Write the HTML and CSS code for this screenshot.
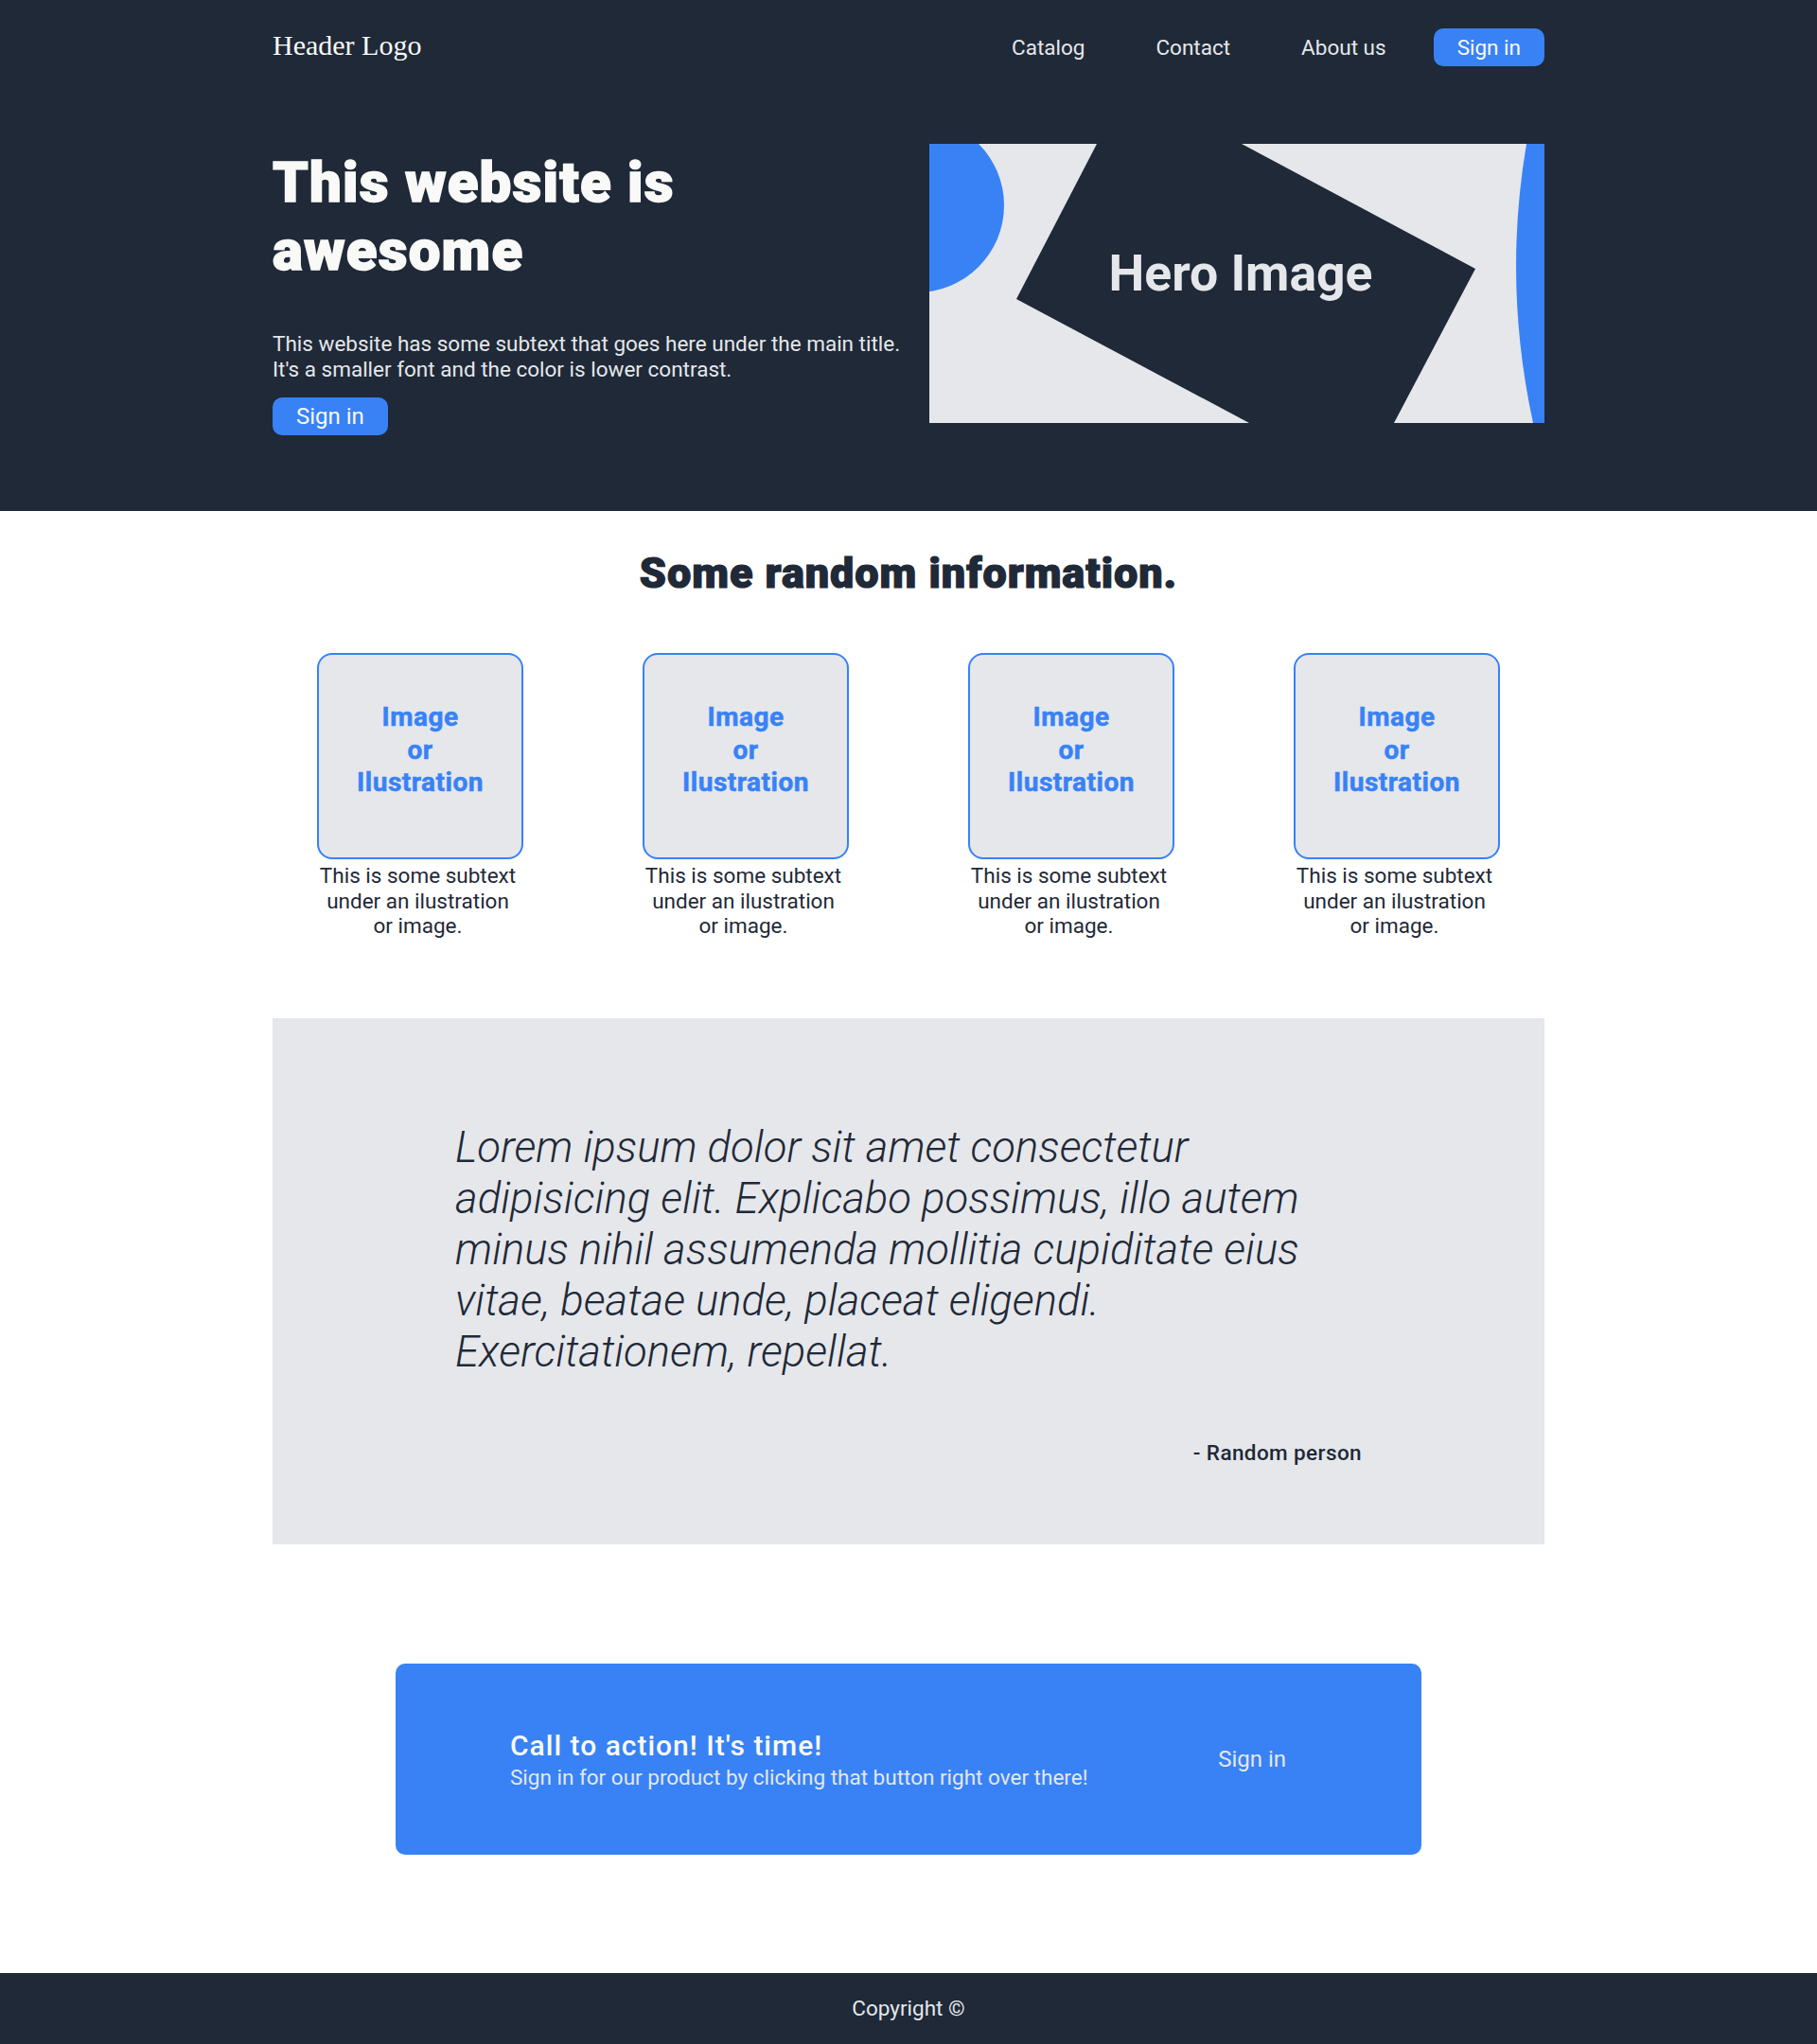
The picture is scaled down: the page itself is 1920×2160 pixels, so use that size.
FILE: index.html
```html
<!DOCTYPE html>
<html lang="en">
<head>
<meta charset="utf-8">
<title>Landing Page</title>
<link rel="stylesheet" href="styles.css">
</head>
<body>
<section class="top">
  <div class="container">
    <header class="header">
      <div class="logo">Header Logo</div>
      <nav>
        <ul class="nav">
          <li><a class="nav-link" href="#">Catalog</a></li>
          <li><a class="nav-link" href="#">Contact</a></li>
          <li><a class="nav-link" href="#">About us</a></li>
          <li><a class="btn" href="#">Sign in</a></li>
        </ul>
      </nav>
    </header>
    <div class="hero">
      <div class="hero-text">
        <h1 class="hero-title">This website is awesome</h1>
        <p class="hero-sub">This website has some subtext that goes here under the main title. It's a smaller font and the color is lower contrast.</p>
        <a class="btn btn-hero" href="#">Sign in</a>
      </div>
      <svg class="hero-image" width="650" height="295" viewBox="0 0 650 295" aria-label="Hero Image">
        <rect width="650" height="295" fill="#e5e7eb"/>
        <circle cx="-13" cy="65" r="92" fill="#3882f6"/>
        <polygon points="177,0 330,0 577,132 491,295 338,295 92,164" fill="#1f2937"/>
        <path d="M631 0 Q606 147 638 295 L650 295 L650 0 Z" fill="#3882f6"/>
        <text x="329" y="155" text-anchor="middle" class="hero-image-text">Hero Image</text>
      </svg>
    </div>
  </div>
</section>

<section class="info">
  <h2 class="info-title">Some random information.</h2>
  <div class="cards">
    <div class="card-item">
      <div class="card-img">Image<br>or<br>Ilustration</div>
      <p class="card-text">This is some subtext under an ilustration or image.</p>
    </div>
    <div class="card-item">
      <div class="card-img">Image<br>or<br>Ilustration</div>
      <p class="card-text">This is some subtext under an ilustration or image.</p>
    </div>
    <div class="card-item">
      <div class="card-img">Image<br>or<br>Ilustration</div>
      <p class="card-text">This is some subtext under an ilustration or image.</p>
    </div>
    <div class="card-item">
      <div class="card-img">Image<br>or<br>Ilustration</div>
      <p class="card-text">This is some subtext under an ilustration or image.</p>
    </div>
  </div>
</section>

<section class="quote-section">
  <div class="quote-box">
    <p class="quote">Lorem ipsum dolor sit amet consectetur adipisicing elit. Explicabo possimus, illo autem minus nihil assumenda mollitia cupiditate eius vitae, beatae unde, placeat eligendi. Exercitationem, repellat.</p>
    <p class="quote-author">- Random person</p>
  </div>
</section>

<section class="cta-section">
  <div class="cta">
    <div class="cta-text">
      <div class="cta-title">Call to action! It's time!</div>
      <div class="cta-sub">Sign in for our product by clicking that button right over there!</div>
    </div>
    <a class="cta-btn" href="#">Sign in</a>
  </div>
</section>

<footer class="footer">Copyright ©</footer>
</body>
</html>
```

FILE: styles.css
```css
* {
  box-sizing: border-box;
}

body {
  margin: 0;
  font-family: Roboto, "Liberation Sans", sans-serif;
  color: #1f2937;
  background: #ffffff;
}

a {
  text-decoration: none;
}

.container {
  width: 1344px;
  margin: 0 auto;
}

/* ---------- top / hero ---------- */
.top {
  background: #1f2937;
  padding: 30px 0 80px;
}

.header {
  display: flex;
  justify-content: space-between;
  align-items: center;
  height: 40px;
}

.logo {
  font-family: "Liberation Serif", "Times New Roman", serif;
  font-size: 30px;
  color: #f9faf8;
  margin-bottom: 4px;
}

.nav {
  display: flex;
  align-items: center;
  gap: 25px;
  list-style: none;
  margin: 0;
  padding: 0;
}

.nav-link {
  display: block;
  padding: 0 25px;
  font-size: 22.5px;
  line-height: 28px;
  color: #e5e7eb;
}

.btn {
  display: inline-block;
  padding: 6px 25px;
  font-size: 22.5px;
  line-height: 28px;
  color: #f9faf8;
  background: #3882f6;
  border-radius: 10px;
}

.btn-hero {
  font-size: 24px;
}

.hero {
  display: flex;
  margin-top: 82px;
}

.hero-text {
  flex: 1;
  padding-top: 5px;
}

.hero-title {
  max-width: 620px;
  margin: 0;
  font-size: 60px;
  line-height: 72px;
  font-weight: 900;
  letter-spacing: 1.2px;
  -webkit-text-stroke: 1.5px #f9faf8;
  color: #f9faf8;
}

.hero-sub {
  margin: 49px 0 16px;
  font-size: 22.5px;
  line-height: 27px;
  color: #e5e7eb;
}

.hero-image {
  flex-shrink: 0;
  display: block;
}

.hero-image-text {
  font-family: Roboto, "Liberation Sans", sans-serif;
  font-weight: 700;
  font-size: 53.5px;
  fill: #e5e7eb;
}

/* ---------- info ---------- */
.info {
  padding-top: 39px;
}

.info-title {
  margin: 0;
  text-align: center;
  font-size: 45px;
  line-height: 53px;
  font-weight: 900;
  letter-spacing: 0.95px;
  -webkit-text-stroke: 1.2px #1f2937;
  color: #1f2937;
}

.cards {
  display: flex;
  justify-content: center;
  gap: 126px;
  margin-top: 58px;
}

.card-item {
  width: 218px;
}

.card-img {
  height: 218px;
  border: 2.5px solid #3882f6;
  border-radius: 16px;
  background: #e5e7eb;
  display: flex;
  align-items: center;
  justify-content: center;
  text-align: center;
  padding-bottom: 12px;
  font-size: 28px;
  line-height: 34.7px;
  font-weight: 700;
  letter-spacing: 0.5px;
  -webkit-text-stroke: 0.5px #3882f6;
  color: #3882f6;
}

.card-text {
  margin: 4px 0 0;
  padding-right: 5px;
  text-align: center;
  font-size: 22.5px;
  line-height: 26.5px;
  color: #1f2937;
}

/* ---------- quote ---------- */
.quote-section {
  margin-top: 84px;
}

.quote-box {
  width: 1344px;
  margin: 0 auto;
  background: #e5e7eb;
  padding: 110px 193px 84px;
}

.quote {
  margin: 0;
  font-size: 45.5px;
  line-height: 54px;
  font-weight: 300;
  font-style: italic;
  color: #1f2937;
}

.quote-author {
  margin: 66px 0 0;
  text-align: right;
  font-size: 22.5px;
  line-height: 26.5px;
  font-weight: 500;
  letter-spacing: 0.4px;
  color: #1f2937;
}

/* ---------- CTA ---------- */
.cta-section {
  padding: 126px 0 125px;
}

.cta {
  width: 1084px;
  height: 202px;
  margin: 0 auto;
  background: #3882f6;
  border-radius: 10px;
  padding: 0 118px 0 121px;
  display: flex;
  justify-content: space-between;
  align-items: center;
}

.cta-title {
  font-size: 30px;
  line-height: 35px;
  font-weight: 500;
  letter-spacing: 1px;
  color: #f9faf8;
}

.cta-sub {
  margin-top: 3px;
  font-size: 22.5px;
  line-height: 26.5px;
  color: #e5e7eb;
}

.cta-btn {
  display: inline-block;
  padding: 6px 25px;
  font-size: 24px;
  line-height: 28px;
  color: #e5e7eb;
}

/* ---------- footer ---------- */
.footer {
  background: #1f2937;
  padding: 24px 0;
  text-align: center;
  font-size: 22.5px;
  line-height: 26.5px;
  color: #e5e7eb;
}
```
